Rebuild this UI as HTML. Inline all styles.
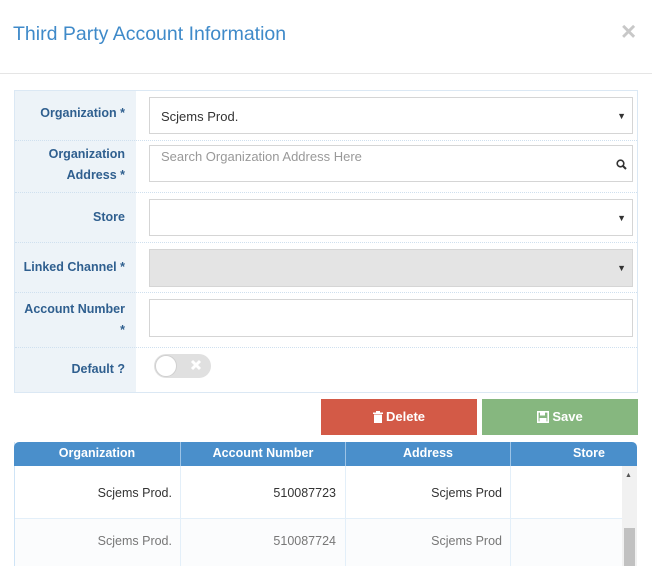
<!DOCTYPE html>
<html><head><style>
*{margin:0;padding:0;box-sizing:border-box}
body{width:652px;height:566px;overflow:hidden;background:#fff;font-family:"Liberation Sans",sans-serif;position:relative}
.a{position:absolute}
.title{left:13px;top:23px;font-size:19.5px;color:#3f8ac9}
.close{left:621px;top:16px;font-size:26px;color:#c8c8c8;font-weight:bold}
.hr{left:0;top:73px;width:652px;height:1px;background:#e5e5e5}
.box{left:14px;top:90px;width:624px;height:303px;border:1px solid #dbe8f4}
.lab{left:15px;top:91px;width:121px;height:301px;background:#edf3f8}
.l{position:absolute;right:527px;text-align:right;font-size:12.5px;font-weight:bold;color:#2f5f8f;line-height:21px}
.sep{position:absolute;left:15px;width:622px;border-top:1px dotted #cfe0ef}
.in{position:absolute;left:149px;width:484px;border:1px solid #d5d5d5;background:#fff;font-size:13px;color:#333;padding-left:11px}
.arr{position:absolute;right:6px;top:13px;font-size:9px;line-height:10px;color:#333}
.btn{position:absolute;top:399px;height:36px;color:#fff;font-size:13px;font-weight:bold;text-align:center;line-height:36px}
.btn svg{vertical-align:-2px;margin-right:3px}
.th{position:absolute;top:442px;height:24px;background:#4a8fcb;color:#fff;font-weight:bold;font-size:12.5px;text-align:center;line-height:22px;border-right:1px solid #9cc3e6}
.td{position:absolute;font-size:12.5px;text-align:right;border-right:1px solid #e3eff9}
</style></head><body>
<div class="a title">Third Party Account Information</div>
<div class="a close">×</div>
<div class="a hr"></div>
<div class="a box"></div>
<div class="a lab"></div>
<div class="l" style="top:103px">Organization *</div>
<div class="l" style="top:144px;width:90px">Organization Address *</div>
<div class="l" style="top:207px">Store</div>
<div class="l" style="top:257px">Linked Channel *</div>
<div class="l" style="top:299px;width:105px">Account Number *</div>
<div class="l" style="top:359px">Default ?</div>
<div class="sep" style="top:140px"></div>
<div class="sep" style="top:192px"></div>
<div class="sep" style="top:242px"></div>
<div class="sep" style="top:292px"></div>
<div class="sep" style="top:347px"></div>
<div class="in" style="top:97px;height:37px;line-height:37px">Scjems Prod.<span class="arr">▼</span></div>
<div class="in" style="top:145px;height:37px;color:#999;line-height:22px">Search Organization Address Here<svg class="a" style="right:5px;top:13px" width="11" height="11" viewBox="0 0 11 11"><circle cx="4.5" cy="4.5" r="3.3" fill="none" stroke="#333" stroke-width="1.6"/><path d="M7 7l3 3" stroke="#333" stroke-width="2"/></svg></div>
<div class="in" style="top:199px;height:37px"><span class="arr">▼</span></div>
<div class="in" style="top:249px;height:38px;background:#e4e4e4"><span class="arr">▼</span></div>
<div class="in" style="top:299px;height:38px"></div>
<div class="a" style="left:154px;top:354px;width:57px;height:24px;border-radius:12px;background:#e0e0e0"></div>
<div class="a" style="left:155px;top:355px;width:22px;height:22px;border-radius:11px;background:#fff;border:1px solid #d0d0d0"></div>
<svg class="a" style="left:190px;top:359px" width="12" height="12" viewBox="0 0 12 12"><path d="M2 2l8 8M10 2l-8 8" stroke="#fff" stroke-width="3"/></svg>
<div class="btn" style="left:321px;width:156px;background:#d35a47"><svg width="10" height="12" viewBox="0 0 10 12"><rect x="0" y="1.5" width="10" height="1.5" fill="#fff"/><rect x="3" y="0" width="4" height="2" fill="#fff"/><rect x="1" y="3.5" width="8" height="8.5" fill="#fff"/></svg>Delete</div>
<div class="btn" style="left:482px;width:156px;background:#86b77f"><svg width="12" height="12" viewBox="0 0 12 12"><rect x="0.8" y="0.8" width="10.4" height="10.4" fill="none" stroke="#fff" stroke-width="1.6"/><rect x="3" y="1" width="5" height="3.5" fill="#fff"/><rect x="2.5" y="7" width="7" height="4" fill="#fff"/></svg>Save</div>
<div class="a" style="left:14px;top:442px;width:623px;height:124px;border-left:1px solid #cfe4f6"></div>
<div class="th" style="left:14px;width:167px;border-radius:5px 0 0 0">Organization</div>
<div class="th" style="left:181px;width:165px">Account Number</div>
<div class="th" style="left:346px;width:165px">Address</div>
<div class="th" style="left:511px;width:126px;border-right:none;border-radius:0 5px 0 0;padding-left:30px">Store</div>
<div class="a" style="left:15px;top:518px;width:607px;height:48px;background:#fbfcfd;border-top:1px solid #e3eff9"></div>
<div class="td" style="left:15px;top:466px;width:166px;height:100px"></div>
<div class="td" style="left:181px;top:466px;width:165px;height:100px"></div>
<div class="td" style="left:346px;top:466px;width:165px;height:100px"></div>
<div class="a" style="left:15px;top:486px;width:157px;text-align:right;font-size:12.5px;color:#333">Scjems Prod.</div>
<div class="a" style="left:181px;top:486px;width:155px;text-align:right;font-size:12.5px;color:#333">510087723</div>
<div class="a" style="left:346px;top:486px;width:156px;text-align:right;font-size:12.5px;color:#333">Scjems Prod</div>
<div class="a" style="left:15px;top:534px;width:157px;text-align:right;font-size:12.5px;color:#777">Scjems Prod.</div>
<div class="a" style="left:181px;top:534px;width:155px;text-align:right;font-size:12.5px;color:#777">510087724</div>
<div class="a" style="left:346px;top:534px;width:156px;text-align:right;font-size:12.5px;color:#777">Scjems Prod</div>
<div class="a" style="left:622px;top:466px;width:15px;height:100px;background:#f1f1f1"></div>
<div class="a" style="left:625px;top:472px;font-size:7px;color:#555">▲</div>
<div class="a" style="left:624px;top:528px;width:11px;height:38px;background:#c1c1c1"></div>
</body></html>
